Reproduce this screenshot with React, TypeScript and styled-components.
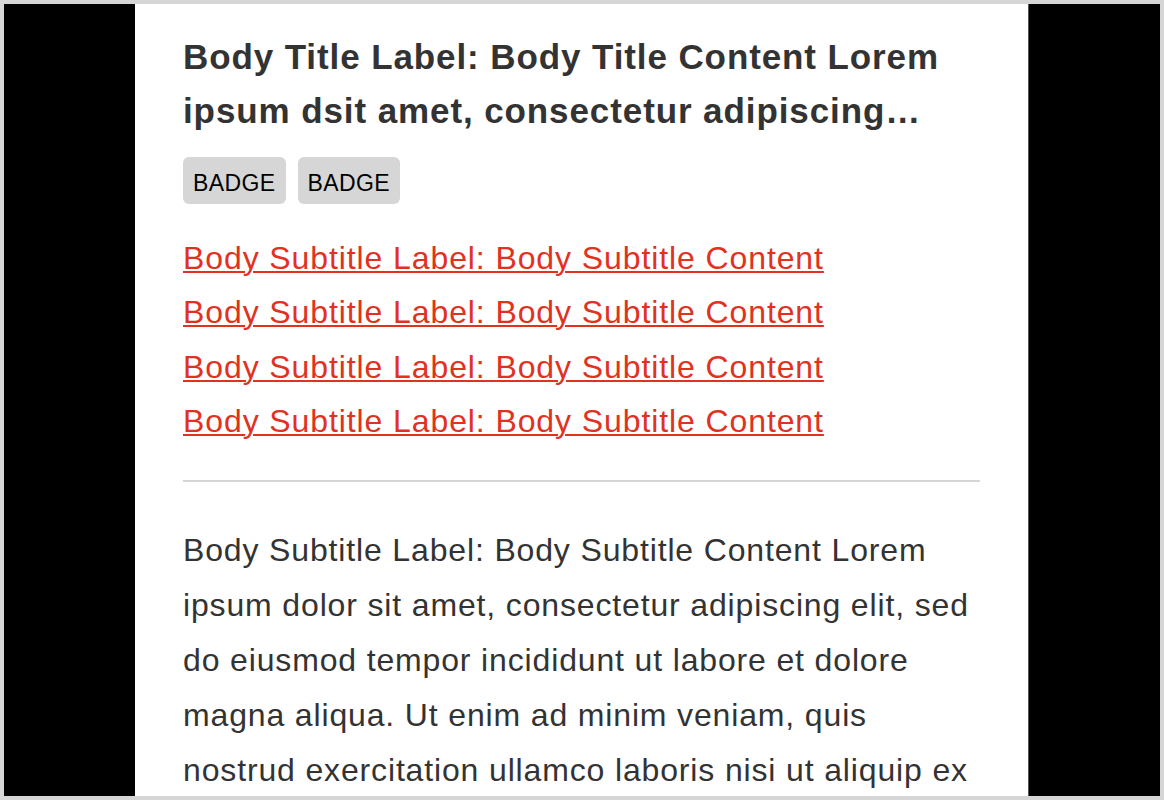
import React from "react";
import styled, { createGlobalStyle } from "styled-components";

const Global = createGlobalStyle`
  html, body { margin: 0; padding: 0; }
  body { font-family: "Liberation Sans", Arial, sans-serif; }
  * { box-sizing: border-box; }
`;

const Frame = styled.div`
  width: 1164px;
  height: 800px;
  border: 4px solid #d6d6d6;
  background: #000;
  display: flex;
  justify-content: center;
  overflow: hidden;
`;

const Panel = styled.main`
  width: 894px;
  height: 100%;
  background: #fff;
  border-right: 1px solid #555;
  padding: 26px 48px 0 48px;
  overflow: hidden;
  color: #333;
`;

const Title = styled.h1`
  margin: 0;
  font-size: 35px;
  font-weight: 700;
  letter-spacing: 0.9px;
  line-height: 54px;
  color: #333;
  display: -webkit-box;
  -webkit-line-clamp: 2;
  -webkit-box-orient: vertical;
  overflow: hidden;
`;

const Badges = styled.div`
  display: flex;
  gap: 12px;
  margin-top: 19px;
`;

const Badge = styled.span`
  display: inline-flex;
  align-items: center;
  height: 47px;
  padding: 5px 10px 0 10px;
  background: #d6d6d6;
  border-radius: 6px;
  font-size: 23px;
  letter-spacing: 0.4px;
  color: #000;
  text-transform: uppercase;
`;

const Links = styled.div`
  display: flex;
  flex-direction: column;
  margin-top: 27px;
`;

const SubLink = styled.a`
  font-size: 32px;
  letter-spacing: 0.9px;
  line-height: 54.3px;
  color: #e1321f;
  text-decoration: underline;
  text-decoration-thickness: 2px;
  text-underline-offset: 2px;
  width: fit-content;
`;

const Divider = styled.hr`
  margin: 32px 0 0 0;
  border: none;
  height: 2px;
  background: #d6d6d6;
`;

const Paragraph = styled.p`
  margin: 41px 0 0 0;
  font-size: 32px;
  letter-spacing: 0.85px;
  line-height: 55px;
  color: #333;
`;

const title =
  "Body Title Label: Body Title Content Lorem ipsum dsit amet, consectetur adipiscing…";
const para =
  "Body Subtitle Label: Body Subtitle Content Lorem ipsum dolor sit amet, consectetur adipiscing elit, sed do eiusmod tempor incididunt ut labore et dolore magna aliqua. Ut enim ad minim veniam, quis nostrud exercitation ullamco laboris nisi ut aliquip ex ea commodo consequat.";

export default function App() {
  return (
    <>
      <Global />
      <Frame>
        <Panel>
          <Title>{title}</Title>
          <Badges>
            <Badge>Badge</Badge>
            <Badge>Badge</Badge>
          </Badges>
          <Links>
            {[0, 1, 2, 3].map((i) => (
              <SubLink key={i} href="#">
                Body Subtitle Label: Body Subtitle Content
              </SubLink>
            ))}
          </Links>
          <Divider />
          <Paragraph>{para}</Paragraph>
        </Panel>
      </Frame>
    </>
  );
}
